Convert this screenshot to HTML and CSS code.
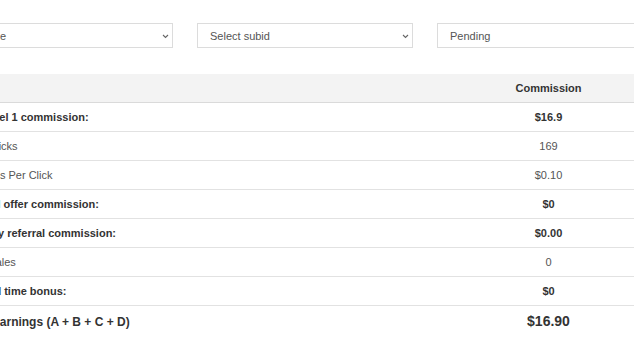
FILE: index.html
```html
<!DOCTYPE html>
<html lang="en">
<head>
    <meta charset="UTF-8">
    <meta name="viewport" content="width=device-width, initial-scale=1.0">
    <title>Earnings</title>
    <link rel="stylesheet" href="styles.css">
</head>
<body>
    <div class="page">
        <div class="filters">
            <div class="select-box">
                <select class="field">
                    <option>All time</option>
                </select>
                <svg class="chevron" width="7" height="5" viewBox="0 0 7 5"><path d="M1 1l2.5 2.5L6 1" fill="none" stroke="#666" stroke-width="1.1"/></svg>
            </div>
            <div class="select-box">
                <select class="field">
                    <option>Select subid</option>
                </select>
                <svg class="chevron" width="7" height="5" viewBox="0 0 7 5"><path d="M1 1l2.5 2.5L6 1" fill="none" stroke="#666" stroke-width="1.1"/></svg>
            </div>
            <input class="field" type="text" value="Pending" readonly>
        </div>

        <table class="earnings">
            <thead>
                <tr>
                    <th class="label"></th>
                    <th class="amount">Commission</th>
                </tr>
            </thead>
            <tbody>
                <tr class="section">
                    <td class="label">My Level 1 commission:</td>
                    <td class="amount">$16.9</td>
                </tr>
                <tr>
                    <td class="label">Total Clicks</td>
                    <td class="amount">169</td>
                </tr>
                <tr>
                    <td class="label">Earnings Per Click</td>
                    <td class="amount">$0.10</td>
                </tr>
                <tr class="section">
                    <td class="label">Special offer commission:</td>
                    <td class="amount">$0</td>
                </tr>
                <tr class="section">
                    <td class="label">Monthly referral commission:</td>
                    <td class="amount">$0.00</td>
                </tr>
                <tr>
                    <td class="label">Total Sales</td>
                    <td class="amount">0</td>
                </tr>
                <tr class="section">
                    <td class="label">Limited time bonus:</td>
                    <td class="amount">$0</td>
                </tr>
                <tr class="total">
                    <td class="label">Total earnings (A + B + C + D)</td>
                    <td class="amount">$16.90</td>
                </tr>
            </tbody>
        </table>
    </div>
</body>
</html>
```

FILE: styles.css
```css
body {
    margin: 0;
    background: #fff;
    font-family: "Liberation Sans", Arial, sans-serif;
    font-size: 11px;
    color: #555;
    overflow: hidden;
}
.page {
    width: 696px;
    margin-left: -43px; /* page is scrolled a little to the right */
    padding-top: 23px;
}
.filters {
    display: grid;
    grid-template-columns: repeat(3, 216px);
    gap: 24px;
}
.select-box {
    position: relative;
}
.field {
    display: block;
    width: 100%;
    height: 25px;
    box-sizing: border-box;
    border: 1px solid #dcdcdc;
    border-radius: 0;
    background: #fff;
    padding: 0 12px;
    font-family: inherit;
    font-size: 11px;
    color: #555;
    appearance: none;
    -webkit-appearance: none;
    outline: none;
}
.chevron {
    position: absolute;
    right: 4px;
    top: 11px;
}
.earnings {
    width: 100%;
    margin-top: 26px;
    border-collapse: collapse;
}
.earnings th,
.earnings td {
    height: 28px;
    padding: 0 6px 0 5px;
    border-bottom: 1px solid #e2e2e2;
    line-height: 14px;
}
.earnings thead th {
    background: #f3f3f3;
    color: #333;
    font-weight: bold;
    border-bottom: 1px solid #dadada;
}
.earnings .label {
    text-align: left;
}
.earnings .amount {
    width: 197px;
    text-align: center;
}
.section td {
    color: #333;
    font-weight: bold;
}
.total td {
    height: 46px;
    vertical-align: top;
    padding-top: 9px;
    color: #333;
    font-weight: bold;
    font-size: 12px;
}
.total .amount {
    font-size: 14px;
    padding-top: 8px;
}
```
